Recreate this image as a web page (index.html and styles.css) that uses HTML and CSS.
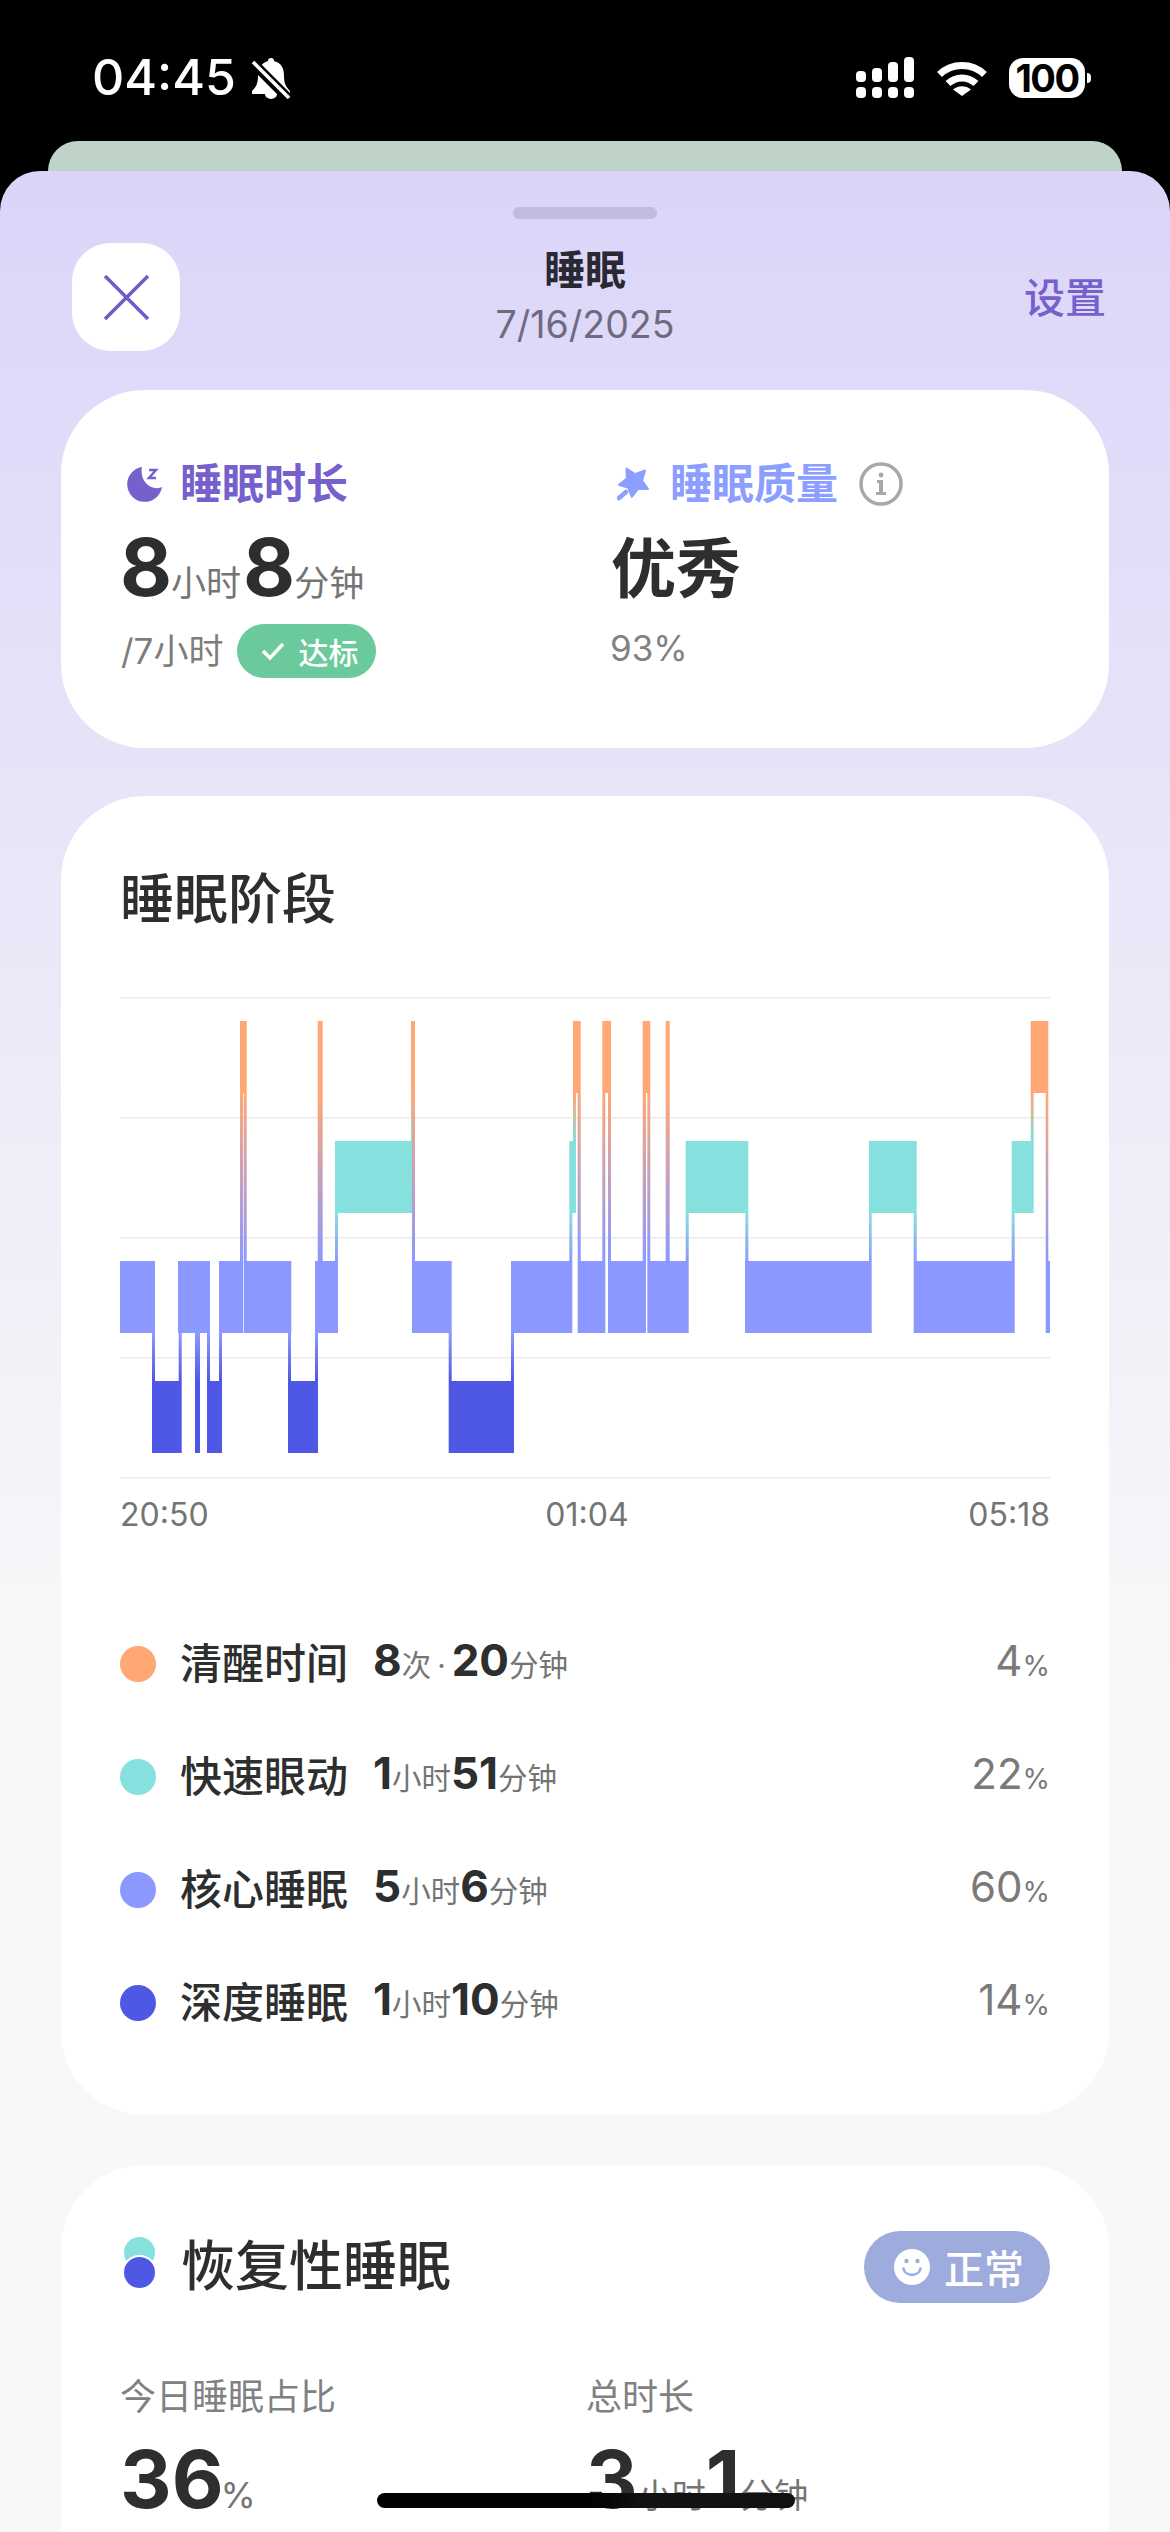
FILE: index.html
```html
<!DOCTYPE html>
<html lang="zh">
<head>
<meta charset="utf-8">
<title>睡眠</title>
<link rel="stylesheet" href="styles.css">
</head>
<body>
<header class="status">
  <div class="status-left">
    <span class="time">04:45</span>
    <svg class="bell" viewBox="0 0 40 42"><path fill="#fff" d="M20 1a3 3 0 0 1 3 3C31 6 33 12 33 19c0 8 2 11 6 15v3H1v-3c4-4 6-7 6-15C7 12 10 6 17 4a3 3 0 0 1 3-3zM14 37h12a6 5 0 0 1-12 0z"/><path stroke="#000" stroke-width="10" d="M0 4l38 38"/><path stroke="#fff" stroke-width="3.5" d="M2 5l36 36"/></svg>
  </div>
  <div class="status-right">
    <svg class="signal" viewBox="0 0 58 41" fill="#fff"><rect x="0" y="14" width="10" height="11" rx="4"/><rect x="16" y="11" width="10" height="14" rx="4"/><rect x="32" y="5" width="10" height="20" rx="4"/><rect x="48" y="0" width="10" height="25" rx="4"/><rect x="0" y="30" width="10" height="11" rx="4"/><rect x="16" y="30" width="10" height="11" rx="4"/><rect x="32" y="30" width="10" height="11" rx="4"/><rect x="48" y="30" width="10" height="11" rx="4"/></svg>
    <svg class="wifi" viewBox="0 0 50 37"><path fill="none" stroke="#fff" stroke-width="7" d="M2.5 15.5C15 3.500 35 3.500 47.500 15.500M11 24.500C19 17 31 17 39 24.500"/><path fill="#fff" d="M16 30.500C21 26 29 26 34 30.500L25 37z"/></svg>
    <div class="battery"><span class="battery-level">100</span><i class="battery-tip"></i></div>
  </div>
</header>
<div class="back-card"></div>
<main class="sheet">
  <div class="handle"></div>
  <div class="topbar">
    <button class="close" aria-label="关闭"><svg viewBox="0 0 45 45" class="close-x"><path d="M1 1l43 43M44 1L1 44"/></svg></button>
    <div class="title-block">
      <div class="title">睡眠</div>
      <div class="date">7/16/2025</div>
    </div>
    <div class="settings">设置</div>
  </div>

  <section class="card card-summary">
    <div class="summary-col">
      <div class="summary-head head-duration">
        <svg class="head-icon" viewBox="0 0 36 36"><path fill="#7660CC" d="M15 1A17.500 17.500 0 1 0 35 21C24 26 12 15 15 1Z"/><path fill="none" stroke="#7660CC" stroke-width="2.500" d="M22 4h7l-7 8h7"/></svg>
        <span>睡眠时长</span>
      </div>
      <div class="big-value"><b>8</b><small>小时</small><b>8</b><small>分钟</small></div>
      <div class="sub-row">
        <span class="goal">/7小时</span>
        <span class="goal-badge"><svg class="check" viewBox="0 0 24 20"><path d="M2 10l7 7L22 3"/></svg>达标</span>
      </div>
    </div>
    <div class="summary-col">
      <div class="summary-head head-quality">
        <svg class="head-icon" viewBox="0 0 34 34"><path fill="#8C9EFF" stroke="#8C9EFF" stroke-width="2" stroke-linejoin="round" d="M9.500 1.500L18 7.100L28 3.500L25 13.600L31 22L20.800 22.100L14.800 30L11.400 20.800L2 17.800L9.800 11.500Z"/><path stroke="#8C9EFF" stroke-width="4.500" stroke-linecap="round" d="M2 31l7-6"/></svg>
        <span>睡眠质量</span>
        <svg class="info" viewBox="0 0 44 44"><circle cx="22" cy="22" r="20" fill="none" stroke="#A8A8A8" stroke-width="3.500"/><circle cx="22" cy="13" r="2.400" fill="#A8A8A8"/><path fill="#A8A8A8" d="M18 18h6v12h3v3H17v-3h3v-9h-2z"/></svg>
      </div>
      <div class="big-value quality-value">优秀</div>
      <div class="sub-row"><span class="quality-pct">93%</span></div>
    </div>
  </section>

  <section class="card card-stages">
    <h2 class="card-title">睡眠阶段</h2>
    <svg class="chart" viewBox="120 997 930 482" width="930" height="482">
      <defs>
        <linearGradient id="oc" x1="0" y1="0" x2="0" y2="1"><stop offset="0" stop-color="#FFA876"/><stop offset="1" stop-color="#8C99FF"/></linearGradient>
        <linearGradient id="ot" x1="0" y1="0" x2="0" y2="1"><stop offset="0" stop-color="#FFA876"/><stop offset="1" stop-color="#85E0DE"/></linearGradient>
        <linearGradient id="tc" x1="0" y1="0" x2="0" y2="1"><stop offset="0" stop-color="#85E0DE"/><stop offset="1" stop-color="#8C99FF"/></linearGradient>
        <linearGradient id="cd" x1="0" y1="0" x2="0" y2="1"><stop offset="0" stop-color="#8C99FF"/><stop offset="1" stop-color="#4F58E5"/></linearGradient>
      </defs>
      <g class="grid">
        <rect x="120" y="997" width="930" height="1.500"/><rect x="120" y="1117" width="930" height="1.500"/><rect x="120" y="1237" width="930" height="1.500"/><rect x="120" y="1357" width="930" height="1.500"/><rect x="120" y="1477" width="930" height="1.500"/>
      </g>
      <g class="bar-core">
        <rect x="120" y="1261" width="35" height="72"/><rect x="178" y="1261" width="32" height="72"/><rect x="219" y="1261" width="24.300" height="72"/><rect x="244" y="1261" width="47.300" height="72"/><rect x="315" y="1261" width="23" height="72"/><rect x="412" y="1261" width="39.700" height="72"/><rect x="511" y="1261" width="61.300" height="72"/><rect x="577.700" y="1261" width="27.600" height="72"/><rect x="608" y="1261" width="38" height="72"/><rect x="647.300" y="1261" width="41.400" height="72"/><rect x="745" y="1261" width="126.700" height="72"/><rect x="913.700" y="1261" width="101" height="72"/><rect x="1045.700" y="1261" width="4.300" height="72"/>
      </g>
      <g class="bar-deep">
        <rect x="152" y="1381" width="29.700" height="72"/><rect x="195" y="1381" width="5" height="72"/><rect x="207" y="1381" width="15" height="72"/><rect x="288" y="1381" width="30" height="72"/><rect x="448.700" y="1381" width="65.300" height="72"/>
      </g>
      <g class="bar-rem">
        <rect x="335" y="1141" width="77" height="72"/><rect x="569.300" y="1141" width="6.700" height="72"/><rect x="685.700" y="1141" width="62.600" height="72"/><rect x="869" y="1141" width="47.700" height="72"/><rect x="1011.700" y="1141" width="22" height="72"/>
      </g>
      <g class="bar-awake">
        <rect x="240" y="1021" width="6.700" height="72"/><rect x="317.700" y="1021" width="5" height="72"/><rect x="411" y="1021" width="4" height="72"/><rect x="573" y="1021" width="7.700" height="72"/><rect x="602.300" y="1021" width="8.700" height="72"/><rect x="642.700" y="1021" width="7.600" height="72"/><rect x="665.700" y="1021" width="4" height="72"/><rect x="1030.700" y="1021" width="17.600" height="72"/>
      </g>
      <g fill="url(#cd)">
        <rect x="152" y="1333" width="3" height="48"/><rect x="178.700" y="1333" width="3" height="48"/><rect x="195" y="1333" width="5" height="48"/><rect x="207" y="1333" width="3" height="48"/><rect x="219" y="1333" width="3" height="48"/><rect x="288" y="1333" width="3" height="48"/><rect x="315" y="1333" width="3" height="48"/><rect x="448.700" y="1333" width="3" height="48"/><rect x="511" y="1333" width="3" height="48"/>
      </g>
      <g fill="url(#oc)">
        <rect x="240" y="1093" width="3" height="168"/><rect x="243.700" y="1093" width="3" height="168"/><rect x="317.700" y="1093" width="5" height="168"/><rect x="412" y="1093" width="3" height="168"/><rect x="577.700" y="1093" width="3" height="168"/><rect x="602.300" y="1093" width="3" height="168"/><rect x="608" y="1093" width="3" height="168"/><rect x="642.700" y="1093" width="3.300" height="168"/><rect x="647.300" y="1093" width="3" height="168"/><rect x="665.700" y="1093" width="4" height="168"/><rect x="1045.700" y="1093" width="2.600" height="168"/>
      </g>
      <g fill="url(#ot)">
        <rect x="411" y="1093" width="1" height="48"/><rect x="573" y="1093" width="3" height="48"/><rect x="1030.700" y="1093" width="3" height="48"/>
      </g>
      <g fill="url(#tc)">
        <rect x="335" y="1213" width="3" height="48"/><rect x="569.300" y="1213" width="3" height="48"/><rect x="685.700" y="1213" width="3" height="48"/><rect x="745.300" y="1213" width="3" height="48"/><rect x="869" y="1213" width="2.700" height="48"/><rect x="913.700" y="1213" width="3" height="48"/><rect x="1011.700" y="1213" width="3" height="48"/>
      </g>
    </svg>
    <div class="axis"><span>20:50</span><span class="axis-mid">01:04</span><span>05:18</span></div>
    <ul class="legend">
      <li class="legend-row"><i class="dot dot-awake"></i><span class="legend-name">清醒时间</span><span class="legend-val"><b>8</b><small>次</small><small class="sep">·</small><b>20</b><small>分钟</small></span><span class="legend-pct">4<small>%</small></span></li>
      <li class="legend-row"><i class="dot dot-rem"></i><span class="legend-name">快速眼动</span><span class="legend-val"><b>1</b><small>小时</small><b>51</b><small>分钟</small></span><span class="legend-pct">22<small>%</small></span></li>
      <li class="legend-row"><i class="dot dot-core"></i><span class="legend-name">核心睡眠</span><span class="legend-val"><b>5</b><small>小时</small><b>6</b><small>分钟</small></span><span class="legend-pct">60<small>%</small></span></li>
      <li class="legend-row"><i class="dot dot-deep"></i><span class="legend-name">深度睡眠</span><span class="legend-val"><b>1</b><small>小时</small><b>10</b><small>分钟</small></span><span class="legend-pct">14<small>%</small></span></li>
    </ul>
  </section>

  <section class="card card-restore">
    <div class="restore-head">
      <div class="restore-title">
        <span class="pair"><i class="pair-top"></i><i class="pair-bottom"></i></span>
        <h2 class="card-title">恢复性睡眠</h2>
      </div>
      <span class="normal-badge"><svg class="smile" viewBox="0 0 36 36"><circle cx="18" cy="18" r="18" fill="#fff"/><circle cx="12.500" cy="12" r="2.200" fill="#9EABDD"/><circle cx="23.500" cy="12" r="2.200" fill="#9EABDD"/><path fill="none" stroke="#9EABDD" stroke-width="2.600" stroke-linecap="round" d="M9.500 19.500C11 28 25 28 26.500 19.500"/></svg>正常</span>
    </div>
    <div class="restore-grid">
      <div><div class="stat-label">今日睡眠占比</div><div class="stat-val"><b>36</b><small class="stat-unit">%</small></div></div>
      <div><div class="stat-label">总时长</div><div class="stat-val"><b>3</b><small>小时</small><b>1</b><small>分钟</small></div></div>
    </div>
  </section>
</main>
<div class="home-indicator"></div>
</body>
</html>
```
FILE: styles.css
```css
* { box-sizing: border-box; }
html, body { margin: 0; padding: 0; }
body {
  width: 1170px;
  height: 2532px;
  overflow: hidden;
  position: relative;
  background: #000;
  font-family: Inter, "Noto Sans CJK SC", sans-serif;
  color: #2D2F2E;
}
svg { display: block; }
ul { list-style: none; margin: 0; padding: 0; }
h2 { margin: 0; }
i { display: block; }

.status {
  height: 141px;
  display: flex;
  justify-content: space-between;
  align-items: flex-start;
  padding: 57px 85px 0 92px;
}
.status-left { display: flex; align-items: center; height: 41px; }
.time { color: #fff; font-size: 50px; font-weight: 500; line-height: 41px; }
.bell { width: 40px; height: 42px; margin-left: 15px; }
.status-right { display: flex; align-items: center; }
.signal { width: 58px; height: 41px; }
.wifi { width: 50px; height: 37px; margin-left: 23px; }
.battery {
  width: 76px; height: 40px; margin-left: 22px;
  background: #fff; border-radius: 14px;
  position: relative;
  display: flex; align-items: center; justify-content: center;
}
.battery-level { color: #000; font-size: 38px; font-weight: 700; line-height: 40px; letter-spacing: -1.500px; }
.battery-tip {
  position: absolute; left: 78px; top: 15px;
  width: 4px; height: 10px; background: #fff;
  border-radius: 0 5px 5px 0;
}

.back-card {
  height: 30px;
  margin: 0 48px;
  background: #BFD3C9;
  border-radius: 30px 30px 0 0;
}
.sheet {
  height: 2361px;
  overflow: hidden;
  background: linear-gradient(180deg, #DBD4F8 0, #DFDAF9 200px, #EBE9F8 800px, #F7F9F9 1500px);
  border-radius: 40px 40px 0 0;
  padding-top: 36px;
}
.handle { width: 144px; height: 12px; margin: 0 auto; background: #C2BBDE; border-radius: 6px; }
.topbar {
  display: grid;
  grid-template-columns: 1fr auto 1fr;
  align-items: center;
  padding: 0 72px;
  margin-top: 24px;
  height: 108px;
}
.close {
  width: 108px; height: 108px; padding: 0; border: 0;
  background: #fff; border-radius: 38px;
  display: flex; align-items: center; justify-content: center;
}
.close-x { width: 45px; height: 45px; }
.close-x path { fill: none; stroke: #6F5BCB; stroke-width: 3.500px; }
.title-block { text-align: center; }
.title { font-size: 41px; line-height: 50px; font-weight: 700; color: #2A2833; padding-top: 1px; }
.date { font-size: 37.500px; line-height: 50px; margin-top: 5px; color: #6E6B7E; }
.settings { justify-self: end; margin-right: -8px; padding-top: 1px; font-size: 41px; line-height: 50px; font-weight: 500; color: #7560CC; }

.card { background: #fff; border-radius: 84px; margin: 0 61px; }
.card-summary {
  margin-top: 39px;
  height: 358px;
  padding: 69px 0 0 60px;
  display: grid;
  grid-template-columns: 490px 1fr;
}
.summary-head { display: flex; align-items: center; height: 50px; font-size: 42px; font-weight: 700; line-height: 50px; }
.head-duration { color: #7660CC; }
.head-quality { color: #8C9EFF; }
.head-icon { width: 36px; height: 36px; margin: 0 17px 0 6px; }
.head-quality .head-icon { margin-left: 6px; width: 34px; height: 34px; margin-right: 19px; }
.info { width: 44px; height: 44px; margin-left: 21px; }
.big-value { display: flex; align-items: baseline; height: 90px; margin-top: 13px; line-height: 90px; }
.big-value b { font-size: 80px; font-weight: 700; margin-left: 2px; }
.big-value b:first-child { margin-left: -1px; }
.big-value small { font-size: 35px; color: #737573; margin-left: -1px; }
.quality-value { font-size: 65px; font-weight: 700; padding-top: 2px; }
.sub-row { display: flex; align-items: center; height: 54px; margin-top: 12px; }
.goal { font-size: 35px; color: #7D7D7D; padding-bottom: 6px; }
.goal-badge {
  display: flex; align-items: center; height: 54px; margin-left: 14px;
  padding: 0 18px 0 24px; border-radius: 27px;
  background: #6ACA9B; color: #fff; font-size: 30px; font-weight: 500;
}
.check { width: 24px; height: 20px; margin-right: 13px; }
.check path { fill: none; stroke: #fff; stroke-width: 3.500px; }
.quality-pct { font-size: 35px; color: #828282; padding-bottom: 6px; margin-left: -1px; }

.card-stages { margin-top: 48px; height: 1319px; padding: 69px 59px 0 59px; }
.card-title { font-size: 54px; font-weight: 500; line-height: 70px; color: #2D2F2E; }
.chart { margin-top: 62px; }
.grid rect { fill: #EBEBEB; }
.bar-awake { fill: #FFA876; }
.bar-rem { fill: #85E0DE; }
.bar-core { fill: #8A98FF; }
.bar-deep { fill: #4F58E5; }
.axis {
  display: flex; justify-content: space-between;
  margin-top: 14px; font-size: 32px; line-height: 44px; color: #737573;
}
.axis-mid { margin-left: -3px; }
.legend { margin-top: 70px; }
.legend-row { display: flex; align-items: center; height: 113px; }
.dot { width: 36px; height: 36px; border-radius: 50%; }
.dot-awake { background: #FFA876; }
.dot-rem { background: #85E0DE; }
.dot-core { background: #8A98FF; }
.dot-deep { background: #4F58E5; }
.legend-name { margin-left: 24px; padding-bottom: 7px; font-size: 42px; font-weight: 500; width: 193px; color: #2D2F2E; }
.legend-val { display: flex; align-items: baseline; padding-bottom: 7px; }
.legend-val b { font-size: 44px; font-weight: 700; }
.legend-val small { font-size: 29.500px; color: #737573; }
.legend-val .sep { margin: 0 6px; }
.legend-pct { margin-left: auto; padding-bottom: 7px; font-size: 42px; color: #7A7A7A; }
.legend-pct small { font-size: 28px; }

.card-restore { margin-top: 50px; height: 600px; padding: 66px 59px 0 59px; }
.restore-head { display: flex; align-items: center; justify-content: space-between; height: 72px; }
.restore-title { display: flex; align-items: center; }
.pair { position: relative; width: 31px; height: 50px; margin: 0 26px 10px 4px; }
.pair-top { position: absolute; left: 0; top: 0; width: 31px; height: 31px; border-radius: 50%; background: #85E0DE; }
.pair-bottom { position: absolute; left: 0; top: 20px; width: 31px; height: 31px; border-radius: 50%; background: #4F58E5; box-shadow: 0 0 0 2px #fff; }
.normal-badge {
  display: flex; align-items: center; height: 72px;
  padding: 0 26px 0 30px; border-radius: 36px;
  background: #9EABDD; color: #fff; font-size: 40px; font-weight: 500;
}
.smile { width: 36px; height: 36px; margin-right: 14px; }
.restore-grid { display: grid; grid-template-columns: 466px 1fr; margin-top: 68px; }
.stat-label { font-size: 36px; line-height: 50px; color: #808282; padding-top: 1px; }
.stat-val { display: flex; align-items: baseline; height: 100px; line-height: 100px; margin-top: 7px; }
.stat-val b { font-size: 80px; font-weight: 700; }
.stat-val small { font-size: 34px; color: #737573; }
.stat-val .stat-unit { margin-left: -3px; font-size: 36px; }

.home-indicator {
  position: absolute; left: 377px; top: 2493px;
  width: 418px; height: 15px; border-radius: 8px;
  background: linear-gradient(90deg, #000 0, #000 50%, #131313 65%, #111 100%);
}
```
